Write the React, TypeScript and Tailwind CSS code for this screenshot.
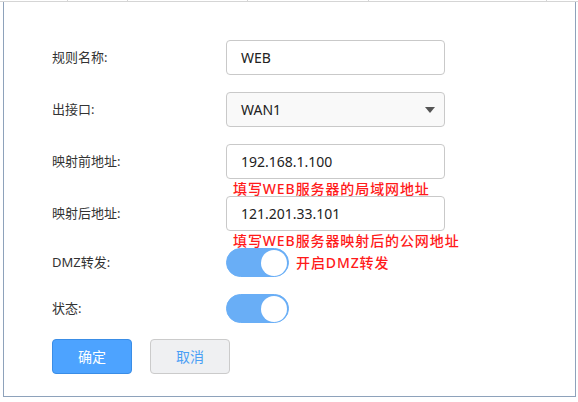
import React from "react";

const cjk = "font-['Noto_Sans','Noto_Sans_CJK_SC',sans-serif]";

function Toggle() {
  return (
    <div className="flex h-[29px] w-[63px] items-center justify-end rounded-full border border-[#69aef6] bg-[#69aef6] pr-px">
      <div className="h-[26px] w-[26px] rounded-full bg-white" />
    </div>
  );
}

function Row({
  label,
  children,
  hint,
}: {
  label: string;
  children: React.ReactNode;
  hint?: string;
}) {
  return (
    <div className="flex items-center">
      <div className="w-[174px] text-[13px] text-[#333]">{label}</div>
      <div className="relative">
        {children}
        {hint && (
          <div className="absolute left-[7px] top-[36px] whitespace-nowrap text-[14px] font-medium leading-[18px] tracking-[0.9px] text-[#ff1a1a]">
            {hint}
          </div>
        )}
      </div>
    </div>
  );
}

function TextBox({ value }: { value: string }) {
  return (
    <div className="flex h-[35px] w-[219px] items-center rounded-[4px] border border-[#c9c9c9] bg-white pl-[14px] text-[14px] text-[#222]">
      {value}
    </div>
  );
}

export default function App() {
  return (
    <div className={`h-[402px] w-[578px] bg-white ${cjk}`}>
      <div className="flex h-px">
        <div className="w-[68px] border-r border-[#d5d5d5]" />
        <div className="w-[60px] border-r border-[#d5d5d5]" />
        <div className="w-[120px] border-r border-[#d5d5d5]" />
        <div className="w-[121px] border-r border-[#d5d5d5]" />
        <div className="w-[178px] border-r border-[#d5d5d5]" />
      </div>
      <div className="h-px bg-[#d5d5d5]" />
      <div className="ml-[3px] flex h-[395px] w-[573px] flex-col gap-[17px] border-x border-b border-[#8ea2bb] pl-[48px] pt-[38px]">
        <Row label="规则名称:">
          <TextBox value="WEB" />
        </Row>
        <Row label="出接口:">
          <div className="flex h-[35px] w-[219px] items-center justify-between rounded-[4px] border border-[#c9c9c9] bg-[#f9f9f9] pl-[14px] pr-[9px] text-[14px] text-[#222]">
            <span>WAN1</span>
            <svg width="10" height="6" viewBox="0 0 10 6">
              <path d="M0 0 L10 0 L5 6 Z" fill="#555" />
            </svg>
          </div>
        </Row>
        <Row label="映射前地址:" hint="填写WEB服务器的局域网地址">
          <TextBox value="192.168.1.100" />
        </Row>
        <Row label="映射后地址:" hint="填写WEB服务器映射后的公网地址">
          <TextBox value="121.201.33.101" />
        </Row>
        <Row label="DMZ转发:">
          <div className="flex items-center gap-[7px]">
            <Toggle />
            <span className="text-[14px] font-medium tracking-[0.9px] text-[#ff1a1a]">
              开启DMZ转发
            </span>
          </div>
        </Row>
        <Row label="状态:">
          <Toggle />
        </Row>
        <div className="-mt-px flex gap-[18px]">
          <button className="h-[35px] w-[80px] rounded-[4px] border border-[#3a8de6] bg-[#4da3ff] text-[14px] text-white">
            确定
          </button>
          <button className="h-[35px] w-[80px] rounded-[4px] border border-[#cbcbcb] bg-[#eff0f2] text-[14px] text-[#4a9ff5]">
            取消
          </button>
        </div>
      </div>
    </div>
  );
}
